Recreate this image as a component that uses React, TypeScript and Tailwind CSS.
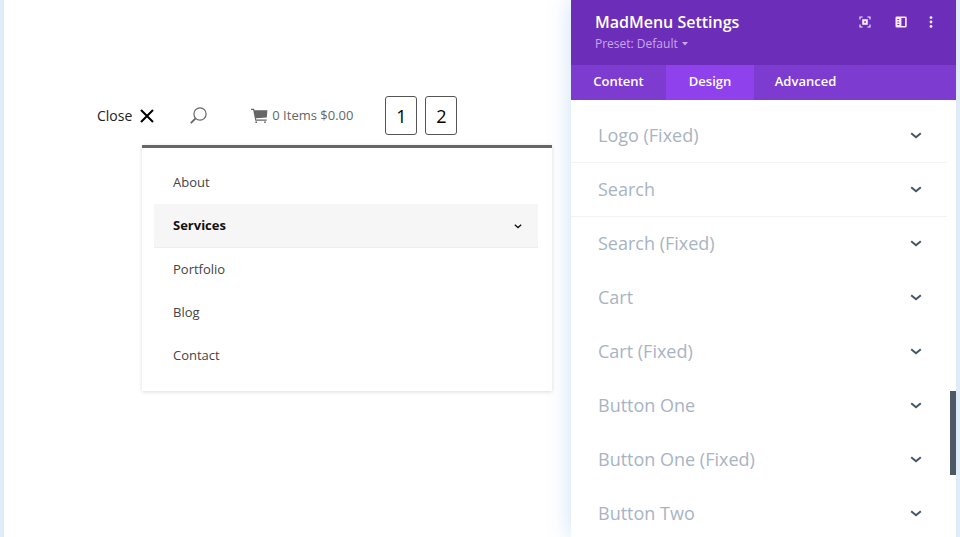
import React from "react";

const navItems = ["About", "Services", "Portfolio", "Blog", "Contact"];
const tabs = [
  { name: "Content", style: "w-[95px]" },
  { name: "Design", style: "w-[88px] bg-[#8f42ec]" },
  { name: "Advanced", style: "w-[103px]" },
];
const groups = [
  { name: "Logo (Fixed)", ruled: true },
  { name: "Search", ruled: true },
  { name: "Search (Fixed)", ruled: false },
  { name: "Cart", ruled: false },
  { name: "Cart (Fixed)", ruled: false },
  { name: "Button One", ruled: false },
  { name: "Button One (Fixed)", ruled: false },
  { name: "Button Two", ruled: false },
];

function Chevron({ className }: { className: string }) {
  return (
    <svg viewBox="0 0 12 8" className={className} fill="none" stroke="currentColor" strokeWidth="2" aria-hidden="true">
      <path d="M1.2 2.2 L6 6.3 L10.8 2.2" />
    </svg>
  );
}

function CartIcon() {
  return (
    <svg viewBox="0 0 17 16" className="h-4 w-[17px]" fill="currentColor" aria-hidden="true">
      <path d="M0 .8h3l.6 1.5H16.4L15.8 9.4 4.8 10.2l.3 1.4h10.6v1.2H4.3L2.2 2H0z" />
      <circle cx="5.2" cy="14.2" r=".9" />
      <circle cx="14" cy="14.2" r=".9" />
    </svg>
  );
}

function TopBar() {
  return (
    <div className="flex h-[39px] items-center pl-[93px]">
      <button type="button" className="flex items-center gap-2 text-sm text-[#222]">
        Close
        <svg viewBox="0 0 14 14" className="size-[14px]" stroke="#000" strokeWidth="2" fill="none" aria-hidden="true">
          <path d="M1 1 L13 13 M13 1 L1 13" />
        </svg>
      </button>
      <button type="button" aria-label="Search" className="ml-9 text-[#666]">
        <svg viewBox="0 0 17 17" className="size-[17px]" fill="none" stroke="currentColor" aria-hidden="true">
          <circle cx="10" cy="7" r="6.1" strokeWidth="1.2" />
          <path d="M5.6 11.4 L.8 16.2" strokeWidth="1.8" />
        </svg>
      </button>
      <a href="#cart" className="ml-11 flex items-center gap-1 whitespace-nowrap text-[13px] font-medium text-[#666]">
        <CartIcon />
        0 Items $0.00
      </a>
      <div className="ml-8 flex gap-2">
        <button type="button" className="h-[39px] w-8 rounded-[3px] border border-[#555] text-lg text-black">1</button>
        <button type="button" className="h-[39px] w-8 rounded-[3px] border border-[#555] text-lg text-black">2</button>
      </div>
    </div>
  );
}

function DropMenu() {
  return (
    <nav className="ml-[138px] mr-[19px] mt-2.5 border-t-3 border-[#666] bg-white pb-[14px] pl-3 pr-[14px] pt-[13px] shadow-[0_1px_4px_rgba(0,0,0,0.14)]">
      <ul>
        {navItems.map((item) => (
          <li key={item}>
            {item === "Services" ? (
              <a href="#services" className="flex h-11 items-center justify-between border-b border-[#eee] bg-[#f6f6f6] pl-[19px] pr-4 text-[13px] font-bold text-[#111]">
                {item}
                <Chevron className="h-[6px] w-2" />
              </a>
            ) : (
              <a href={"#" + item.toLowerCase()} className="flex h-[43px] items-center pl-[19px] text-[13px] text-[#444]">
                {item}
              </a>
            )}
          </li>
        ))}
      </ul>
    </nav>
  );
}

function PanelHeader() {
  return (
    <header className="flex h-[65px] justify-between bg-[#6c2eb9] pl-6 pr-[23px] pt-3 text-white">
      <div>
        <h1 className="text-base leading-5 font-semibold">MadMenu Settings</h1>
        <button type="button" className="mt-1 flex items-center gap-1 text-xs font-medium text-[#c9a6f0]">
          Preset: Default
          <svg viewBox="0 0 6 4" className="h-1 w-[6px]" fill="currentColor" aria-hidden="true">
            <path d="M0 0h6L3 3.6z" />
          </svg>
        </button>
      </div>
      <div className="flex h-5 items-center text-[#fbeaff]">
        <button type="button" aria-label="Expand">
          <svg viewBox="0 0 12 12" className="size-3" fill="none" stroke="currentColor" aria-hidden="true">
            <path d="M1 3.6V1h2.6M8.4 1H11v2.6M11 8.4V11H8.4M3.6 11H1V8.4" strokeWidth="1.1" />
            <rect x="4.2" y="4.2" width="3.6" height="3.6" strokeWidth="2" />
          </svg>
        </button>
        <button type="button" aria-label="Dock panel" className="ml-6">
          <svg viewBox="0 0 12 12" className="size-3" aria-hidden="true">
            <rect x="1.3" y="1.3" width="9.6" height="9.4" rx=".5" fill="none" stroke="currentColor" strokeWidth="1.6" />
            <path d="M1 1h5.4v10H1z" fill="currentColor" />
            <path d="M2.4 3.5h1.8M2.4 6h1.8M2.4 8.5h1.8" stroke="#6c2eb9" strokeWidth="1" />
          </svg>
        </button>
        <button type="button" aria-label="More options" className="ml-[22px]">
          <svg viewBox="0 0 4 12" className="h-3 w-1" fill="currentColor" aria-hidden="true">
            <circle cx="2" cy="1.6" r="1.4" />
            <circle cx="2" cy="6" r="1.4" />
            <circle cx="2" cy="10.4" r="1.4" />
          </svg>
        </button>
      </div>
    </header>
  );
}

function SettingsPanel() {
  return (
    <aside className="flex w-[385px] shrink-0 flex-col bg-white shadow-[0_0_22px_rgba(60,140,220,0.26)]">
      <PanelHeader />
      <div role="tablist" className="flex h-[35px] shrink-0 bg-[#7e3bd0] text-[13px] font-semibold text-white">
        {tabs.map((tab) => (
          <button key={tab.name} type="button" role="tab" aria-selected={tab.name === "Design"} className={tab.style}>
            {tab.name}
          </button>
        ))}
      </div>
      <div className="flex min-h-0 grow">
        <div className="min-w-0 grow overflow-hidden pr-[3px] pt-[9px]">
          {groups.map((group) => (
            <button
              key={group.name}
              type="button"
              className={
                "flex h-[54px] w-full items-center justify-between border-b pl-[27px] pr-[25px] text-left text-lg text-[#a9b4c3] " +
                (group.ruled ? "border-[#f3f3f5]" : "border-transparent")
              }
            >
              {group.name}
              <Chevron className="h-2 w-3 text-[#46566a]" />
            </button>
          ))}
        </div>
        <div className="flex w-[6px] shrink-0 flex-col">
          <div className="grow-[7]" />
          <div className="h-[84px] bg-[#4c5866]" />
          <div className="grow-[1.5]" />
        </div>
      </div>
    </aside>
  );
}

export default function App() {
  return (
    <div className="flex h-screen overflow-hidden border-x-4 border-[#dfecf7] bg-white font-['Open_Sans',sans-serif]">
      <main className="min-w-0 grow pt-24">
        <TopBar />
        <DropMenu />
      </main>
      <SettingsPanel />
    </div>
  );
}
